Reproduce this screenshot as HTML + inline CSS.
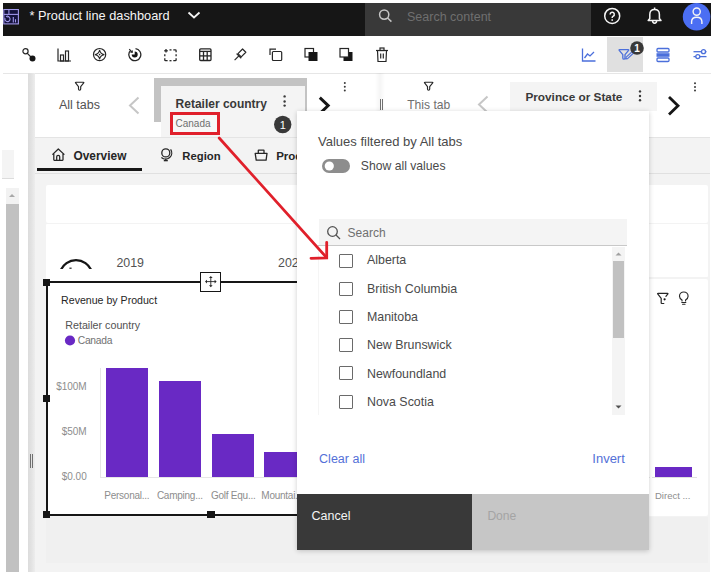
<!DOCTYPE html>
<html><head><meta charset="utf-8"><style>
html,body{margin:0;padding:0;width:712px;height:577px;overflow:hidden;background:#fff}
body{position:relative;font-family:"Liberation Sans", sans-serif}
.a{position:absolute}
.t{white-space:nowrap}
</style></head><body>
<div class="a" style="left:0px;top:0px;width:712px;height:577px;background:#ffffff;"></div>
<div class="a" style="left:3px;top:3px;width:708px;height:33px;background:#161616;"></div>
<svg class="a" style="left:3px;top:9px;" width="17" height="16" viewBox="0 0 17 16"><rect x="0.8" y="0.5" width="14.6" height="14.4" fill="#14123c" stroke="#a097ea" stroke-width="1.1"/><g fill="none" stroke="#a097ea" stroke-width="1.1"><line x1="0.8" y1="5.4" x2="15.4" y2="5.4"/><line x1="5.9" y1="0.5" x2="5.9" y2="5.4"/><path d="M4.4 7.4 A2.6 2.6 0 1 1 2.1 8.9"/><line x1="10.3" y1="8" x2="10.3" y2="13.4"/><line x1="12.5" y1="10.2" x2="12.5" y2="13.4"/></g><path d="M4.6 6.2 L4.6 8.8 L2.6 7.4 Z" fill="#a097ea"/></svg>
<div class="a t" style="left:29.5px;top:9.76px;font-size:12.8px;line-height:12.8px;color:#f4f4f4;font-weight:400;">* Product line dashboard</div>
<svg class="a" style="left:186px;top:10px;" width="16" height="10" viewBox="0 0 16 10"><path d="M2.5 2.5 L8 7.5 L13.5 2.5" fill="none" stroke="#f4f4f4" stroke-width="1.8"/></svg>
<div class="a" style="left:365px;top:3px;width:226px;height:33px;background:#393939;"></div>
<svg class="a" style="left:377px;top:7px;" width="18" height="18" viewBox="0 0 18 18"><g fill="none" stroke="#c6c6c6" stroke-width="1.5"><circle cx="7.2" cy="7.6" r="4.6"/><line x1="10.6" y1="11" x2="14.4" y2="14.6"/></g></svg>
<div class="a t" style="left:407px;top:11.02px;font-size:12.5px;line-height:12.5px;color:#6f6f6f;font-weight:400;">Search content</div>
<svg class="a" style="left:602px;top:6px;" width="20" height="20" viewBox="0 0 20 20"><circle cx="10.2" cy="9.9" r="7.5" fill="none" stroke="#f4f4f4" stroke-width="1.5"/><path d="M8.1 8.4 A2.1 2.1 0 1 1 11 10.3 Q10.2 10.7 10.2 11.6 L10.2 12.1" fill="none" stroke="#f4f4f4" stroke-width="1.5"/><rect x="9.4" y="13.3" width="1.6" height="1.5" fill="#f4f4f4"/></svg>
<svg class="a" style="left:645px;top:5px;" width="20" height="20" viewBox="0 0 20 20"><path d="M3.2 15.5 L4.8 13.5 L4.8 9.5 Q4.8 4.6 9.6 4.6 Q14.4 4.6 14.4 9.5 L14.4 13.5 L16 15.5 Z" fill="none" stroke="#f4f4f4" stroke-width="1.5" stroke-linejoin="round"/><line x1="9.6" y1="2.5" x2="9.6" y2="4.6" stroke="#f4f4f4" stroke-width="1.5"/><path d="M7.6 15.8 Q7.6 18.2 9.6 18.2 Q11.6 18.2 11.6 15.8" fill="none" stroke="#f4f4f4" stroke-width="1.5"/></svg>
<svg class="a" style="left:682px;top:2px;" width="30" height="30" viewBox="0 0 30 30"><circle cx="14.6" cy="14.7" r="13.8" fill="#4b6ef3"/><circle cx="14.7" cy="9.6" r="3.6" fill="none" stroke="#f4f4f4" stroke-width="1.4"/><path d="M9.6 22 L9.6 19.8 Q9.6 15.2 14.7 15.2 Q19.9 15.2 19.9 19.8 L19.9 22" fill="none" stroke="#f4f4f4" stroke-width="1.4"/></svg>
<div class="a" style="left:0px;top:0px;width:712px;height:3px;background:#ffffff;"></div>
<div class="a" style="left:711px;top:0px;width:1px;height:36px;background:#ffffff;"></div>
<svg class="a" style="left:21px;top:47px;" width="16" height="16" viewBox="0 0 16 16"><circle cx="4.5" cy="4.2" r="2.6" fill="none" stroke="#262626" stroke-width="1.2"/><line x1="5.8" y1="5.8" x2="10" y2="10" stroke="#262626" stroke-width="1.2"/><circle cx="11.5" cy="11.5" r="3" fill="#161616"/></svg>
<svg class="a" style="left:56px;top:47px;" width="16" height="16" viewBox="0 0 16 16"><g fill="none" stroke="#262626" stroke-width="1.2"><polyline points="2,1.5 2,14 15,14"/><rect x="4.5" y="8" width="3" height="6"/><rect x="9.5" y="4" width="3" height="10"/></g></svg>
<svg class="a" style="left:91px;top:47px;" width="16" height="16" viewBox="0 0 16 16"><circle cx="8.6" cy="7.6" r="6.1" fill="none" stroke="#262626" stroke-width="1.2"/><path d="M8.6 3.2 Q9.4 6.8 13 7.6 Q9.4 8.4 8.6 12 Q7.8 8.4 4.2 7.6 Q7.8 6.8 8.6 3.2 Z" fill="none" stroke="#262626" stroke-width="1.1" stroke-linejoin="round"/><circle cx="8.6" cy="7.6" r="0.8" fill="#262626"/></svg>
<svg class="a" style="left:126px;top:47px;" width="16" height="16" viewBox="0 0 16 16"><path d="M4.8 3.2 A6 6 0 1 0 9.5 1.7" fill="none" stroke="#262626" stroke-width="1.3"/><path d="M8.7 7.6 L8.7 4.6 A3 3 0 1 1 5.7 7.6 Z" fill="#161616"/><line x1="3.2" y1="2.2" x2="6.4" y2="5.4" stroke="#262626" stroke-width="1.1"/><path d="M6.8 3 L6.8 5.8 L4 5.8 Z" fill="#262626"/></svg>
<svg class="a" style="left:162px;top:47px;" width="16" height="16" viewBox="0 0 16 16"><g fill="none" stroke="#262626" stroke-width="1.3" stroke-linecap="butt"><path d="M11.3 2.9 L13.3 2.9 Q14.1 2.9 14.1 3.7 L14.1 5.3"/><path d="M14.1 11.3 L14.1 12.9 Q14.1 13.7 13.3 13.7 L11.3 13.7"/><path d="M5.6 13.7 L3.6 13.7 Q2.8 13.7 2.8 12.9 L2.8 11.3"/><path d="M7.5 2.9 L9.5 2.9"/><path d="M7.5 13.7 L9.5 13.7"/><path d="M2.8 7.3 L2.8 9.3"/><path d="M14.1 7.3 L14.1 9.3"/><path d="M2.2 3.8 L5.8 3.8"/><path d="M4 2 L4 5.6"/></g></svg>
<svg class="a" style="left:197px;top:47px;" width="16" height="16" viewBox="0 0 16 16"><g fill="none" stroke="#262626" stroke-width="1.3"><rect x="2.7" y="1.9" width="11.3" height="11.6" rx="1"/><line x1="2.7" y1="4.4" x2="14" y2="4.4"/><line x1="2.7" y1="8.9" x2="14" y2="8.9"/><line x1="6.5" y1="4.4" x2="6.5" y2="13.5"/><line x1="10.2" y1="4.4" x2="10.2" y2="13.5"/></g></svg>
<svg class="a" style="left:233px;top:47px;" width="16" height="16" viewBox="0 0 16 16"><g fill="none" stroke="#262626" stroke-width="1.2" stroke-linejoin="round"><path d="M4.97 6.57 L9.57 1.97 L12.83 5.23 L8.23 9.83 Z"/><line x1="3.57" y1="6.57" x2="8.23" y2="11.23"/><line x1="5.9" y1="8.9" x2="1.6" y2="13.2"/></g></svg>
<svg class="a" style="left:267px;top:47px;" width="16" height="16" viewBox="0 0 16 16"><g fill="none" stroke="#262626" stroke-width="1.2"><polyline points="3,8 3,2.2 9,2.2"/><rect x="5.4" y="4.5" width="9.3" height="9" rx="1"/></g></svg>
<svg class="a" style="left:303px;top:47px;" width="16" height="16" viewBox="0 0 16 16"><rect x="2" y="1.5" width="8.5" height="8.5" fill="#fff" stroke="#262626" stroke-width="1.2"/><rect x="5.5" y="5" width="9" height="9" fill="#161616"/></svg>
<svg class="a" style="left:338px;top:47px;" width="16" height="16" viewBox="0 0 16 16"><rect x="5.5" y="5" width="9" height="9" fill="#161616"/><rect x="2" y="1.5" width="8.5" height="8.5" fill="#fff" stroke="#262626" stroke-width="1.2"/></svg>
<svg class="a" style="left:374px;top:47px;" width="16" height="16" viewBox="0 0 16 16"><g fill="none" stroke="#262626" stroke-width="1.2"><line x1="2" y1="3.5" x2="14" y2="3.5"/><rect x="6" y="1" width="4" height="2.5"/><path d="M3.5 3.5 L4 14.5 L12 14.5 L12.5 3.5"/><line x1="6.7" y1="6.5" x2="6.7" y2="11.5"/><line x1="9.3" y1="6.5" x2="9.3" y2="11.5"/></g></svg>
<svg class="a" style="left:581px;top:47px;" width="16" height="16" viewBox="0 0 16 16"><g fill="none" stroke="#4b6fdb" stroke-width="1.3"><polyline points="1.5,1.5 1.5,14 14.5,14"/><polyline points="3.5,11 6.5,7 9,9 13,5"/></g></svg>
<div class="a" style="left:607px;top:37px;width:36px;height:35px;background:#e0e0e0;"></div>
<svg class="a" style="left:617px;top:47px;" width="20" height="16" viewBox="0 0 20 16"><path d="M2.5 2.7 L11.3 2.7 Q12 2.7 11.6 3.3 L8 7.6 L8 11 Q8 12.2 6.9 12.2 Q5.8 12.2 5.8 11 L5.8 7.6 L2.2 3.3 Q1.8 2.7 2.5 2.7 Z" fill="none" stroke="#4b6fdb" stroke-width="1.3" stroke-linejoin="round"/><path d="M8.6 12 L9.2 10.2 L15.2 4.6 L16.6 6 L10.6 11.6 Z" fill="#e0e0e0" stroke="#4b6fdb" stroke-width="1.1" stroke-linejoin="round"/></svg>
<svg class="a" style="left:629px;top:40px;" width="16" height="16" viewBox="0 0 16 16"><circle cx="8" cy="8" r="6.8" fill="#393939"/><text x="8" y="11.6" font-family="Liberation Sans" font-weight="700" font-size="10" fill="#fff" text-anchor="middle">1</text></svg>
<svg class="a" style="left:655px;top:47px;" width="16" height="16" viewBox="0 0 16 16"><g fill="none" stroke="#4b6fdb" stroke-width="1.3"><rect x="2" y="1.5" width="12" height="3.5" rx="1"/><rect x="2" y="11" width="12" height="3.5" rx="1"/></g><rect x="1.5" y="6.2" width="13" height="3.6" fill="#4b6fdb"/></svg>
<svg class="a" style="left:692px;top:47px;" width="16" height="16" viewBox="0 0 16 16"><g fill="none" stroke="#4b6fdb" stroke-width="1.3"><line x1="1.5" y1="4.7" x2="14.5" y2="4.7"/><line x1="1.5" y1="9.6" x2="14.5" y2="9.6"/></g><circle cx="11.5" cy="4.7" r="2" fill="#fff" stroke="#4b6fdb" stroke-width="1.3"/><circle cx="5.8" cy="9.6" r="2" fill="#fff" stroke="#4b6fdb" stroke-width="1.3"/></svg>
<div class="a" style="left:3px;top:72.6px;width:708px;height:1px;background:#e6e6e6;"></div>
<div class="a" style="left:28px;top:73px;width:7px;height:499px;background:linear-gradient(90deg,#dcdcdc 0%,#e2e2e2 45%,#ededed 100%);"></div>
<svg class="a" style="left:73.6px;top:81.4px;" width="11" height="11" viewBox="0 0 11 11"><path d="M1.9 1.2 L9.4 1.2 Q10.2 1.2 9.7 1.9 L6.7 5.6 L6.7 8 Q6.7 9.2 5.6 9.2 Q4.5 9.2 4.5 8 L4.5 5.6 L1.6 1.9 Q1.1 1.2 1.9 1.2 Z" fill="none" stroke="#262626" stroke-width="1.15" stroke-linejoin="round"/></svg>
<div class="a t" style="left:58.9px;top:98.82px;font-size:12.5px;line-height:12.5px;color:#525252;font-weight:400;">All tabs</div>
<svg class="a" style="left:127px;top:96px;" width="14" height="20" viewBox="0 0 14 20"><polyline points="11.5,1.5 3,9.5 11.5,17.5" fill="none" stroke="#c6c6c6" stroke-width="2"/></svg>
<div class="a" style="left:154px;top:78px;width:153px;height:44px;background:#c3c3c3;"></div>
<div class="a" style="left:161px;top:86px;width:144px;height:51px;background:#f4f4f4;"></div>
<div class="a t" style="left:175.6px;top:97.54px;font-size:12px;line-height:12px;color:#393939;font-weight:700;">Retailer country</div>
<svg class="a" style="left:281px;top:94px;" width="8" height="14" viewBox="0 0 8 14"><g fill="#393939"><circle cx="3.6" cy="2.4" r="1.2"/><circle cx="3.6" cy="7.5" r="1.2"/><circle cx="3.6" cy="11.6" r="1.2"/></g></svg>
<div class="a" style="left:169.6px;top:112.2px;width:50.4px;height:22.4px;background:#f7f7f7;border:3px solid #e0202b;box-sizing:border-box"></div>
<div class="a t" style="left:175.5px;top:119.23px;font-size:10px;line-height:10px;color:#6f6f6f;font-weight:400;">Canada</div>
<svg class="a" style="left:273px;top:115px;" width="20" height="20" viewBox="0 0 20 20"><circle cx="9.7" cy="9.5" r="8.7" fill="#393939"/><text x="9.7" y="13.5" font-family="Liberation Sans" font-size="11" fill="#fff" text-anchor="middle">1</text></svg>
<svg class="a" style="left:316px;top:94px;" width="16" height="22" viewBox="0 0 16 22"><polyline points="3.8,3.6 12.2,11.6 3.8,19.6" fill="none" stroke="#161616" stroke-width="2.9"/></svg>
<svg class="a" style="left:341px;top:81px;" width="8" height="12" viewBox="0 0 8 12"><g fill="#393939"><circle cx="3.8" cy="2" r="1"/><circle cx="3.8" cy="5.8" r="1"/><circle cx="3.8" cy="9.5" r="1"/></g></svg>
<div class="a" style="left:375px;top:73px;width:10px;height:64px;background:linear-gradient(90deg,rgba(0,0,0,0),rgba(0,0,0,0.04) 50%,rgba(0,0,0,0));"></div>
<div class="a" style="left:379.5px;top:98.7px;width:1.4px;height:11.8px;background:#707070;"></div>
<div class="a" style="left:381.8px;top:98.7px;width:1.4px;height:11.8px;background:#707070;"></div>
<svg class="a" style="left:423.4px;top:81.4px;" width="11" height="11" viewBox="0 0 11 11"><path d="M1.9 1.2 L9.4 1.2 Q10.2 1.2 9.7 1.9 L6.7 5.6 L6.7 8 Q6.7 9.2 5.6 9.2 Q4.5 9.2 4.5 8 L4.5 5.6 L1.6 1.9 Q1.1 1.2 1.9 1.2 Z" fill="none" stroke="#262626" stroke-width="1.15" stroke-linejoin="round"/></svg>
<div class="a t" style="left:407.2px;top:99.46px;font-size:12.1px;line-height:12.1px;color:#6f6f6f;font-weight:400;">This tab</div>
<svg class="a" style="left:476px;top:95px;" width="14" height="20" viewBox="0 0 14 20"><polyline points="11.5,1.5 3,9.5 11.5,17.5" fill="none" stroke="#c6c6c6" stroke-width="2"/></svg>
<div class="a" style="left:510px;top:82px;width:147px;height:28.5px;background:#f4f4f4;"></div>
<div class="a t" style="left:525.4px;top:92.31px;font-size:11.8px;line-height:11.8px;color:#393939;font-weight:700;">Province or State</div>
<svg class="a" style="left:636px;top:89px;" width="8" height="14" viewBox="0 0 8 14"><g fill="#393939"><circle cx="4" cy="2.4" r="1.2"/><circle cx="4" cy="7" r="1.2"/><circle cx="4" cy="11.3" r="1.2"/></g></svg>
<svg class="a" style="left:665px;top:94px;" width="18" height="24" viewBox="0 0 18 24"><polyline points="4,3 13,11.8 4,20.5" fill="none" stroke="#161616" stroke-width="2.8"/></svg>
<svg class="a" style="left:691px;top:81px;" width="8" height="12" viewBox="0 0 8 12"><g fill="#393939"><circle cx="4" cy="2.2" r="1"/><circle cx="4" cy="6" r="1"/><circle cx="4" cy="9.6" r="1"/></g></svg>
<div class="a" style="left:35px;top:137px;width:675px;height:435px;background:#f3f3f3;"></div>
<div class="a" style="left:35px;top:136.5px;width:675px;height:1px;background:#e4e4e4;"></div>
<div class="a" style="left:35px;top:172.5px;width:675px;height:1px;background:#e0e0e0;"></div>
<svg class="a" style="left:51px;top:147px;" width="15" height="15" viewBox="0 0 15 15"><path d="M1.4 7.6 L7.3 2 L13.4 7.6 M2.8 6.5 L2.8 12.8 Q2.8 13.3 3.3 13.3 L11.5 13.3 Q12 13.3 12 12.8 L12 6.5 M5.7 13.3 L5.7 9.8 Q5.7 8.3 7.2 8.3 Q8.7 8.3 8.7 9.8 L8.7 13.3" fill="none" stroke="#262626" stroke-width="1.25" stroke-linejoin="round"/></svg>
<div class="a t" style="left:73.5px;top:150.63px;font-size:11.9px;line-height:11.9px;color:#262626;font-weight:700;">Overview</div>
<div class="a" style="left:37px;top:168.3px;width:104.6px;height:2.6px;background:#161616;"></div>
<svg class="a" style="left:158px;top:145px;" width="16" height="18" viewBox="0 0 16 18"><g fill="none" stroke="#262626" stroke-width="1.3"><circle cx="7.8" cy="7.9" r="4"/><path d="M12.6 4.3 A6.2 6.2 0 0 1 3.4 12.5"/><line x1="7.8" y1="13.6" x2="7.8" y2="15.5"/></g><rect x="5.8" y="15" width="4" height="1.3" fill="#262626"/></svg>
<div class="a t" style="left:182.3px;top:151.13px;font-size:11.3px;line-height:11.3px;color:#262626;font-weight:700;">Region</div>
<svg class="a" style="left:254px;top:147px;" width="15" height="15" viewBox="0 0 15 15"><g fill="none" stroke="#262626" stroke-width="1.3" stroke-linejoin="round"><path d="M1.2 6.3 L13 6.3 L12.1 13.1 L2.2 13.1 Z"/><path d="M4.3 6.3 L4.3 3.6 Q4.3 3.2 4.7 3.2 L9.6 3.2 Q10 3.2 10 3.6 L10 6.3"/></g></svg>
<div class="a t" style="left:276.2px;top:150.97px;font-size:11.5px;line-height:11.5px;color:#262626;font-weight:700;">Products</div>
<div class="a" style="left:46px;top:184.5px;width:662px;height:38px;background:#ffffff;border-radius:2px"></div>
<div class="a" style="left:46px;top:224px;width:662px;height:53px;background:#ffffff;border-radius:1px"></div>
<svg class="a" style="left:58px;top:257px;" width="36" height="12" viewBox="0 0 36 12"><path d="M2.5 14 A16.5 16.5 0 0 1 33.5 14" fill="none" stroke="#161616" stroke-width="2.4"/><rect x="11.4" y="10.6" width="2.2" height="1.2" fill="#262626"/></svg>
<div class="a t" style="left:116.4px;top:256.90px;font-size:12.4px;line-height:12.4px;color:#525252;font-weight:400;">2019</div>
<div class="a t" style="left:278px;top:256.90px;font-size:12.4px;line-height:12.4px;color:#525252;font-weight:400;">2020</div>
<div class="a" style="left:648px;top:278.5px;width:60px;height:237px;background:#ffffff;border-radius:2px"></div>
<svg class="a" style="left:655px;top:291px;" width="16" height="16" viewBox="0 0 16 16"><g fill="none" stroke="#262626" stroke-width="1.2" stroke-linejoin="round" stroke-linecap="round"><path d="M10.9 5.4 L12.9 2.9 Q13.2 2.3 12.6 2.3 L3 2.3 Q2.3 2.3 2.7 2.9 L6.2 7.3 L6.2 12 Q6.2 12.5 6.7 12.5 L8.8 12.5"/></g><circle cx="9.6" cy="8.3" r="1.1" fill="#161616"/></svg>
<svg class="a" style="left:677px;top:290px;" width="16" height="16" viewBox="0 0 16 16"><g fill="none" stroke="#262626" stroke-width="1.15" stroke-linecap="round"><path d="M5 11 L5 10 Q2.5 8.5 2.5 6.3 A4.3 4.3 0 0 1 11.1 6.3 Q11.1 8.5 8.6 10 L8.6 11"/><line x1="4.8" y1="12.5" x2="8.8" y2="12.5"/><line x1="5.6" y1="14.2" x2="8" y2="14.2"/></g></svg>
<div class="a" style="left:655px;top:467px;width:36.5px;height:10px;background:#6929c4;"></div>
<div class="a" style="left:652px;top:477px;width:45px;height:1px;background:#e0e0e0;"></div>
<div class="a t" style="left:655px;top:491.16px;font-size:9.5px;line-height:9.5px;color:#8d8d8d;font-weight:400;">Direct ...</div>
<div class="a" style="left:46px;top:517px;width:662px;height:46px;background:#f0f0f0;"></div>
<div class="a" style="left:46px;top:276px;width:602px;height:239px;background:#ffffff;"></div>
<div class="a t" style="left:61.1px;top:294.93px;font-size:10.6px;line-height:10.6px;color:#262626;font-weight:400;">Revenue by Product</div>
<div class="a t" style="left:65.3px;top:319.84px;font-size:10.7px;line-height:10.7px;color:#525252;font-weight:400;">Retailer country</div>
<svg class="a" style="left:64px;top:335px;" width="12" height="12" viewBox="0 0 12 12"><circle cx="6" cy="5.5" r="5.1" fill="#6929c4"/></svg>
<div class="a t" style="left:77.8px;top:336.38px;font-size:10.3px;line-height:10.3px;color:#727272;font-weight:400;letter-spacing:-0.3px">Canada</div>
<div class="a" style="left:100px;top:368px;width:1px;height:109px;background:#e6e6e6;"></div>
<div class="a" style="left:100px;top:476.5px;width:550px;height:1px;background:#e6e6e6;"></div>
<div class="a t" style="right:625.3px;top:381.74px;font-size:10px;line-height:10px;color:#8d8d8d;font-weight:400;">$100M</div>
<div class="a t" style="right:625.3px;top:427.24px;font-size:10px;line-height:10px;color:#8d8d8d;font-weight:400;">$50M</div>
<div class="a t" style="right:625.3px;top:471.84px;font-size:10px;line-height:10px;color:#8d8d8d;font-weight:400;">$0.00</div>
<div class="a" style="left:105.7px;top:368.3px;width:42.8px;height:108.39999999999998px;background:#6929c4;"></div>
<div class="a" style="left:158.7px;top:381px;width:42.30000000000001px;height:95.69999999999999px;background:#6929c4;"></div>
<div class="a" style="left:211.7px;top:434px;width:42.30000000000001px;height:42.69999999999999px;background:#6929c4;"></div>
<div class="a" style="left:264.3px;top:452.3px;width:42.19999999999999px;height:24.399999999999977px;background:#6929c4;"></div>
<div class="a t" style="left:104.3px;top:490.84px;font-size:10px;line-height:10px;color:#8d8d8d;font-weight:400;letter-spacing:-0.25px">Personal...</div>
<div class="a t" style="left:156.9px;top:490.84px;font-size:10px;line-height:10px;color:#8d8d8d;font-weight:400;letter-spacing:-0.25px">Camping...</div>
<div class="a t" style="left:211px;top:490.84px;font-size:10px;line-height:10px;color:#8d8d8d;font-weight:400;letter-spacing:-0.25px">Golf Equ...</div>
<div class="a t" style="left:261.3px;top:490.84px;font-size:10px;line-height:10px;color:#8d8d8d;font-weight:400;letter-spacing:-0.25px">Mountai...</div>
<div class="a" style="left:45.5px;top:280.5px;width:602px;height:2px;background:#161616;"></div>
<div class="a" style="left:45.5px;top:280.5px;width:2px;height:235px;background:#161616;"></div>
<div class="a" style="left:45.5px;top:513.8px;width:602px;height:2px;background:#161616;"></div>
<div class="a" style="left:43px;top:278.5px;width:7px;height:7px;background:#161616;"></div>
<div class="a" style="left:43px;top:395px;width:6.5px;height:7px;background:#161616;"></div>
<div class="a" style="left:43px;top:511px;width:7px;height:7px;background:#161616;"></div>
<div class="a" style="left:207px;top:511px;width:7.5px;height:7px;background:#161616;"></div>
<div class="a" style="left:200.2px;top:271.6px;width:20.5px;height:20.7px;background:#ffffff;border:1.8px solid #161616;box-sizing:border-box"></div>
<svg class="a" style="left:203px;top:274px;" width="16" height="16" viewBox="0 0 16 16"><g stroke="#262626" stroke-width="0.9"><line x1="7.8" y1="3" x2="7.8" y2="12.2"/><line x1="3" y1="7.6" x2="12.6" y2="7.6"/></g><g fill="#262626"><path d="M7.8 2 L9.6 4 L6 4 Z"/><path d="M7.8 13.2 L9.6 11.2 L6 11.2 Z"/><path d="M2 7.6 L4 5.8 L4 9.4 Z"/><path d="M13.6 7.6 L11.6 5.8 L11.6 9.4 Z"/></g></svg>
<div class="a" style="left:2px;top:150px;width:12px;height:29px;background:#f4f4f4;"></div>
<div class="a" style="left:2px;top:177.5px;width:12px;height:1.5px;background:#dcdcdc;"></div>
<div class="a" style="left:6px;top:188px;width:12.5px;height:384px;background:#f2f2f2;"></div>
<svg class="a" style="left:6px;top:190px;" width="12" height="10" viewBox="0 0 12 10"><path d="M3 7 L6 4 L9 7 Z" fill="#a8a8a8"/></svg>
<div class="a" style="left:6px;top:203.5px;width:12.5px;height:368px;background:#c1c1c1;"></div>
<div class="a" style="left:29.8px;top:454px;width:1.1px;height:14px;background:#6f6f6f;"></div>
<div class="a" style="left:32px;top:454px;width:1.1px;height:14px;background:#6f6f6f;"></div>
<div class="a" style="left:297px;top:110.5px;width:351.5px;height:439px;background:#fff;box-shadow:0 1px 5px rgba(0,0,0,0.2)"></div>
<div class="a t" style="left:318px;top:135.00px;font-size:13px;line-height:13px;color:#4a4a4a;font-weight:400;">Values filtered by All tabs</div>
<div class="a" style="left:321.7px;top:159.2px;width:28px;height:13.8px;background:#8d8d8d;border-radius:7px"></div>
<svg class="a" style="left:322px;top:159px;" width="14" height="14" viewBox="0 0 14 14"><circle cx="7.3" cy="7" r="4.6" fill="#fff"/></svg>
<div class="a t" style="left:360.8px;top:159.87px;font-size:12.2px;line-height:12.2px;color:#4a4a4a;font-weight:400;">Show all values</div>
<div class="a" style="left:319px;top:219px;width:308px;height:26px;background:#f4f4f4;"></div>
<div class="a" style="left:318px;top:244.5px;width:309px;height:1.2px;background:#c8c8c8;"></div>
<svg class="a" style="left:325px;top:224px;" width="18" height="18" viewBox="0 0 18 18"><g fill="none" stroke="#525252" stroke-width="1.3"><circle cx="7.5" cy="7.5" r="4.8"/><line x1="11" y1="11" x2="15" y2="15"/></g></svg>
<div class="a t" style="left:347.6px;top:227.04px;font-size:12px;line-height:12px;color:#6f6f6f;font-weight:400;">Search</div>
<div class="a" style="left:318px;top:246px;width:1px;height:169px;background:#f5f5f5;"></div>
<div class="a" style="left:338.7px;top:253.5px;width:14.5px;height:14px;background:#fff;border:1.3px solid #6a6a6a;border-radius:1px;box-sizing:border-box"></div>
<div class="a t" style="left:367px;top:254.30px;font-size:12.4px;line-height:12.4px;color:#4a4a4a;font-weight:400;">Alberta</div>
<div class="a" style="left:338.7px;top:281.7px;width:14.5px;height:14px;background:#fff;border:1.3px solid #6a6a6a;border-radius:1px;box-sizing:border-box"></div>
<div class="a t" style="left:367px;top:282.60px;font-size:12.4px;line-height:12.4px;color:#4a4a4a;font-weight:400;">British Columbia</div>
<div class="a" style="left:338.7px;top:309.9px;width:14.5px;height:14px;background:#fff;border:1.3px solid #6a6a6a;border-radius:1px;box-sizing:border-box"></div>
<div class="a t" style="left:367px;top:310.90px;font-size:12.4px;line-height:12.4px;color:#4a4a4a;font-weight:400;">Manitoba</div>
<div class="a" style="left:338.7px;top:338.1px;width:14.5px;height:14px;background:#fff;border:1.3px solid #6a6a6a;border-radius:1px;box-sizing:border-box"></div>
<div class="a t" style="left:367px;top:339.20px;font-size:12.4px;line-height:12.4px;color:#4a4a4a;font-weight:400;">New Brunswick</div>
<div class="a" style="left:338.7px;top:366.3px;width:14.5px;height:14px;background:#fff;border:1.3px solid #6a6a6a;border-radius:1px;box-sizing:border-box"></div>
<div class="a t" style="left:367px;top:367.50px;font-size:12.4px;line-height:12.4px;color:#4a4a4a;font-weight:400;">Newfoundland</div>
<div class="a" style="left:338.7px;top:394.5px;width:14.5px;height:14px;background:#fff;border:1.3px solid #6a6a6a;border-radius:1px;box-sizing:border-box"></div>
<div class="a t" style="left:367px;top:395.80px;font-size:12.4px;line-height:12.4px;color:#4a4a4a;font-weight:400;">Nova Scotia</div>
<div class="a" style="left:612px;top:247px;width:13px;height:168px;background:#f4f4f4;"></div>
<svg class="a" style="left:612px;top:249px;" width="13" height="10" viewBox="0 0 13 10"><path d="M3.5 6.5 L6.5 3.5 L9.5 6.5 Z" fill="#a0a0a0"/></svg>
<div class="a" style="left:612.5px;top:260.5px;width:11.5px;height:77px;background:#c1c1c1;"></div>
<svg class="a" style="left:612px;top:402px;" width="13" height="10" viewBox="0 0 13 10"><path d="M3.5 3.5 L6.5 6.5 L9.5 3.5 Z" fill="#505050"/></svg>
<div class="a t" style="left:319.1px;top:452.72px;font-size:12.5px;line-height:12.5px;color:#5470d8;font-weight:400;">Clear all</div>
<div class="a t" style="left:592.3px;top:451.60px;font-size:13px;line-height:13px;color:#5470d8;font-weight:400;">Invert</div>
<div class="a" style="left:297px;top:493.5px;width:175px;height:56px;background:#393939;"></div>
<div class="a" style="left:472px;top:493.5px;width:176.5px;height:56px;background:#c6c6c6;"></div>
<div class="a t" style="left:311.5px;top:509.72px;font-size:12.5px;line-height:12.5px;color:#f4f4f4;font-weight:400;">Cancel</div>
<div class="a t" style="left:487.4px;top:510.06px;font-size:12.1px;line-height:12.1px;color:#a4a4a4;font-weight:400;">Done</div>
<svg class="a" style="left:0px;top:0px;pointer-events:none" width="712" height="577" viewBox="0 0 712 577"><g stroke="#e0202b" stroke-width="2.8" fill="none" stroke-linecap="round"><line x1="219.2" y1="138" x2="326.4" y2="257.4"/><polyline points="326.7,242.3 326.7,257.8 311,258.3"/></g></svg>
</body></html>
